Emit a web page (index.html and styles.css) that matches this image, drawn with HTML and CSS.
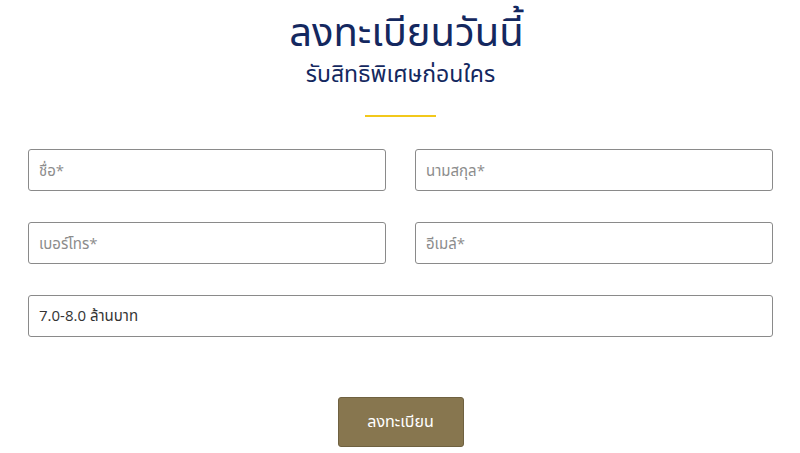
FILE: index.html
```html
<!DOCTYPE html>
<html lang="th">
<head>
<meta charset="utf-8">
<link rel="stylesheet" href="styles.css">
</head>
<body>
<section class="register">
  <h1 class="title">ลงทะเบียนวันนี้</h1>
  <p class="subtitle">รับสิทธิพิเศษก่อนใคร</p>
  <div class="divider"></div>
  <form class="form">
    <div class="grid">
      <input class="field" type="text" placeholder="ชื่อ*">
      <input class="field" type="text" placeholder="นามสกุล*">
      <input class="field" type="text" placeholder="เบอร์โทร*">
      <input class="field" type="text" placeholder="อีเมล์*">
      <input class="field wide" type="text" value="7.0-8.0 ล้านบาท">
    </div>
    <div class="actions">
      <button class="submit" type="button">ลงทะเบียน</button>
    </div>
  </form>
</section>
</body>
</html>
```
FILE: styles.css
```css
html, body {
  margin: 0;
  padding: 0;
  background: #fff;
}
body {
  font-family: "Noto Sans", "Noto Sans Thai", sans-serif;
}
.register {
  padding: 7px 27px 0 28px;
  display: flex;
  flex-direction: column;
  align-items: center;
}
.title {
  margin: 0;
  font-size: 40px;
  font-weight: 400;
  line-height: 48px;
  color: #14285f;
  padding-left: 12px;
}
.subtitle {
  margin: 3px 0 0;
  font-size: 23px;
  line-height: 31px;
  color: #14285f;
}
.divider {
  width: 71px;
  height: 2px;
  background: #f2c81b;
  margin-top: 26px;
}
.form {
  width: 100%;
  margin-top: 32px;
}
.grid {
  display: grid;
  grid-template-columns: 1fr 1fr;
  column-gap: 29px;
  row-gap: 31px;
}
.field {
  box-sizing: border-box;
  height: 42px;
  border: 1px solid #8a8a8a;
  border-radius: 3px;
  padding: 0 10px;
  font-family: "Open Sans", "Noto Sans Thai", sans-serif;
  font-size: 15px;
  color: #333;
  background: #fff;
  width: 100%;
}
.field::placeholder {
  color: #8c8c8c;
}
.wide {
  grid-column: 1 / 3;
}
.actions {
  display: flex;
  justify-content: center;
  margin-top: 60px;
}
.submit {
  width: 126px;
  height: 50px;
  background: #87764f;
  color: #fff;
  border: 1px solid #6f6140;
  border-radius: 3px;
  font-family: "Open Sans", "Noto Sans Thai", sans-serif;
  font-size: 16px;
  cursor: pointer;
}
```
